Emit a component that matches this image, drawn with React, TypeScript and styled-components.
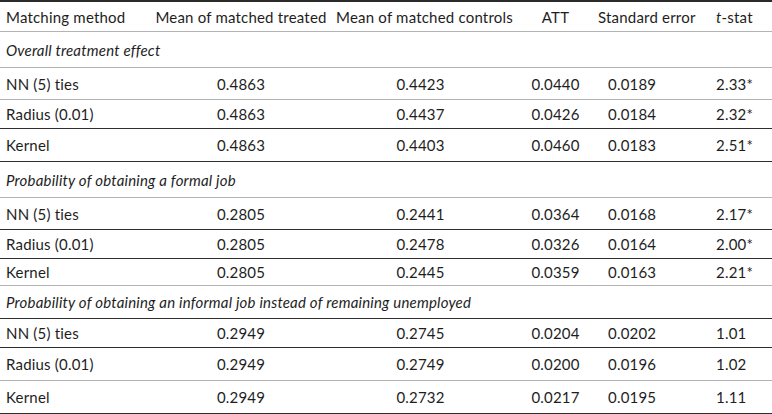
import React from 'react';
import styled, { createGlobalStyle } from 'styled-components';

const GlobalStyle = createGlobalStyle`
  html, body {
    margin: 0;
    padding: 0;
    background: #ffffff;
  }
  body {
    font-family: Lato, "Open Sans", "DejaVu Sans", sans-serif;
    font-size: 15px;
    letter-spacing: 0.2px;
    color: #1e1e1e;
  }
`;

type Body = {
  kind: 'data';
  method: string;
  values: [string, string, string, string, string];
  h: number;
  strong?: boolean;
};

type Section = {
  kind: 'section';
  title: string;
  h: number;
  strong?: boolean;
};

const rows: (Body | Section)[] = [
  { kind: 'section', title: 'Overall treatment effect', h: 35 },
  { kind: 'data', method: 'NN (5) ties', values: ['0.4863', '0.4423', '0.0440', '0.0189', '2.33*'], h: 31 },
  { kind: 'data', method: 'Radius (0.01)', values: ['0.4863', '0.4437', '0.0426', '0.0184', '2.32*'], h: 28, strong: true },
  { kind: 'data', method: 'Kernel', values: ['0.4863', '0.4403', '0.0460', '0.0183', '2.51*'], h: 32, strong: true },
  { kind: 'section', title: 'Probability of obtaining a formal job', h: 35 },
  { kind: 'data', method: 'NN (5) ties', values: ['0.2805', '0.2441', '0.0364', '0.0168', '2.17*'], h: 31, strong: true },
  { kind: 'data', method: 'Radius (0.01)', values: ['0.2805', '0.2478', '0.0326', '0.0164', '2.00*'], h: 28, strong: true },
  { kind: 'data', method: 'Kernel', values: ['0.2805', '0.2445', '0.0359', '0.0163', '2.21*'], h: 26 },
  { kind: 'section', title: 'Probability of obtaining an informal job instead of remaining unemployed', h: 32, strong: true },
  { kind: 'data', method: 'NN (5) ties', values: ['0.2949', '0.2745', '0.0204', '0.0202', '1.01'], h: 28, strong: true },
  { kind: 'data', method: 'Radius (0.01)', values: ['0.2949', '0.2749', '0.0200', '0.0196', '1.02'], h: 32 },
  { kind: 'data', method: 'Kernel', values: ['0.2949', '0.2732', '0.0217', '0.0195', '1.11'], h: 32, strong: true },
];

const App: React.FC = () => (
  <>
    <GlobalStyle />
    <Table>
      <Row $h={29}>
        <Label>Matching method</Label>
        <Head>Mean of matched treated</Head>
        <Head>Mean of matched controls</Head>
        <Head>ATT</Head>
        <HeadLeft>Standard error</HeadLeft>
        <HeadLeft $pad={8}>
          <em>t</em>-stat
        </HeadLeft>
      </Row>
      {rows.map((row, index) =>
        row.kind === 'section' ? (
          <Row $h={row.h} $strong={row.strong} key={`s-${index}`}>
            <SectionTitle>{row.title}</SectionTitle>
          </Row>
        ) : (
          <Row $h={row.h} $strong={row.strong} key={`d-${index}`}>
            <Label>{row.method}</Label>
            <Num>{row.values[0]}</Num>
            <Num $shift={-4}>{row.values[1]}</Num>
            <Num>{row.values[2]}</Num>
            <NumLeft $pad={10}>{row.values[3]}</NumLeft>
            <NumLeft $pad={8}>{row.values[4]}</NumLeft>
          </Row>
        ),
      )}
    </Table>
  </>
);

const Table = styled.div`
  display: flex;
  flex-direction: column;
  width: 772px;
  border-top: 2px solid #2a2a2a;
`;

const Row = styled.div<{ $h: number; $strong?: boolean }>`
  display: grid;
  grid-template-columns: 146px 190px 177px 85px 110px 1fr;
  align-items: center;
  height: ${(p) => p.$h}px;
  border-bottom: 1px solid ${(p) => (p.$strong ? '#2e2e2e' : '#b4b4b4')};
  white-space: nowrap;
`;

const Label = styled.div`
  padding-left: 6px;
`;

const Head = styled.div`
  text-align: center;
`;

const HeadLeft = styled.div<{ $pad?: number }>`
  text-align: left;
  padding-left: ${(p) => p.$pad ?? 0}px;
`;

const Num = styled.div<{ $shift?: number }>`
  text-align: center;
  padding-right: ${(p) => (p.$shift ? -p.$shift * 2 : 0)}px;
`;

const NumLeft = styled.div<{ $pad?: number }>`
  text-align: left;
  padding-left: ${(p) => p.$pad ?? 0}px;
`;

const SectionTitle = styled.div`
  grid-column: 1 / -1;
  padding-left: 6px;
  font-style: italic;
`;

export default App;
